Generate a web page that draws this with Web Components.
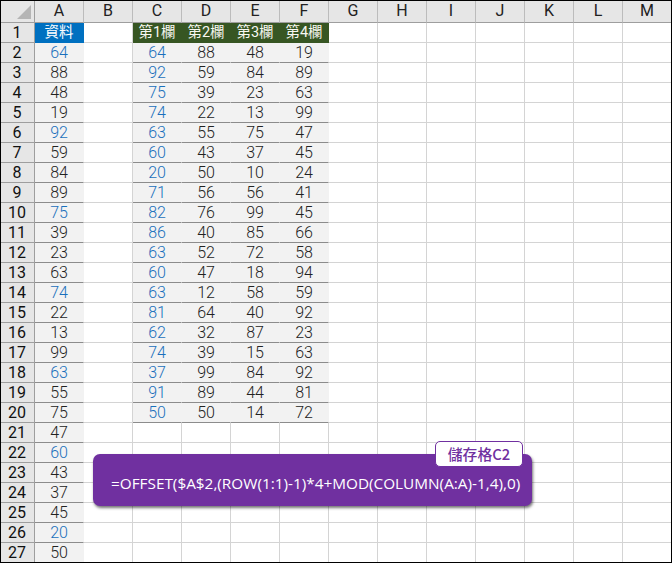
<!DOCTYPE html>
<html><head><meta charset="utf-8"><style>
html,body{margin:0;padding:0;background:#fff}
body{width:672px;height:563px;overflow:hidden;font-family:"Noto Sans CJK TC","Open Sans",sans-serif}
</style></head><body>
<x-sheet></x-sheet>
<script>
const A=[64,88,48,19,92,59,84,89,75,39,23,63,74,22,13,99,63,55,75,47,60,43,37,45,20,50];
const T=[[64,88,48,19],[92,59,84,89],[75,39,23,63],[74,22,13,99],[63,55,75,47],[60,43,37,45],[20,50,10,24],[71,56,56,41],[82,76,99,45],[86,40,85,66],[63,52,72,58],[60,47,18,94],[63,12,58,59],[81,64,40,92],[62,32,87,23],[74,39,15,63],[37,99,84,92],[91,89,44,81],[50,50,14,72]];
class XCell extends HTMLElement{
  constructor(){super();this.attachShadow({mode:'open'}).innerHTML=`<style>
  :host{display:flex;align-items:center;justify-content:center;box-sizing:border-box;min-width:0;height:20px;
   border-right:1px solid #d4d4d4;border-bottom:1px solid #d4d4d4;font:300 16px/1 Roboto,"Noto Sans CJK TC",sans-serif;color:#222;overflow:hidden}
  :host([kind=rowh]){background:#e6e6e6;border-right:1px solid #9e9e9e;border-bottom:1px solid #9e9e9e;color:#111;font-weight:400}
  :host([kind=colh]){background:#e6e6e6;height:23px;border-right:1px solid #bcbcbc;border-bottom:1px solid #9e9e9e;color:#222;font-weight:400}
  :host([kind=data]){background:#f2f2f2;border-right-color:#f2f2f2;border-bottom:1px solid #8c8c8c}
  :host([kind=blue]){background:#f2f2f2;border-right-color:#f2f2f2;border-bottom:1px solid #8c8c8c;color:#1a70bc}
  :host([kind=hA]){background:#0070c0;color:#fff;border-color:#0070c0;font-size:14.5px;font-weight:400;padding-top:2px}
  :host([kind=hG]){background:#375623;color:#f8f8f2;border-color:#375623;font-size:14.5px;font-weight:400;padding-top:2px}
  </style><slot></slot>`;}
}
customElements.define('x-cell',XCell);
class XCorner extends HTMLElement{
  constructor(){super();this.attachShadow({mode:'open'}).innerHTML=`<style>
  :host{display:block;box-sizing:border-box;height:23px;background:#e6e6e6;border-right:1px solid #9e9e9e;border-bottom:1px solid #9e9e9e}
  svg{display:block}</style><svg width="34" height="22"><polygon points="31,5 31,19 17,19" fill="#b5b5b5"/></svg>`;}
}
customElements.define('x-corner',XCorner);
class XCallout extends HTMLElement{
  constructor(){super();this.attachShadow({mode:'open'}).innerHTML=`<style>
  :host{position:absolute;left:93px;top:454px;width:439px;height:52px;box-sizing:border-box;background:#7030a0;border-radius:7px;
   box-shadow:1px 2px 3px rgba(0,0,0,.55);color:#fff;font:15.33px/1 "Open Sans",sans-serif;display:flex;align-items:flex-end;padding:0 0 15px 18px;white-space:nowrap}
  .tag{position:absolute;right:9px;top:-13px;width:88px;height:26px;box-sizing:border-box;background:#fff;border:1px solid #7030a0;border-radius:5px;color:#7030a0;
   font:500 14.8px/23px "Noto Sans CJK TC",sans-serif;text-align:center}
  </style><slot></slot><div class="tag"><slot name="tag"></slot></div>`;}
}
customElements.define('x-callout',XCallout);
class XSheet extends HTMLElement{
  constructor(){super();const r=this.attachShadow({mode:'open'});
   let h='<x-corner></x-corner>';
   'ABCDEFGHIJKLM'.split('').forEach(c=>h+=`<x-cell kind="colh">${c}</x-cell>`);
   const ga=['第1欄','第2欄','第3欄','第4欄'];
   for(let r=1;r<=27;r++){
     h+=`<x-cell kind="rowh">${r}</x-cell>`;
     if(r===1)h+='<x-cell kind="hA">資料</x-cell>';
     else {const v=A[r-2];h+=`<x-cell kind="${(r-2)%4===0?'blue':'data'}">${v}</x-cell>`;}
     h+='<x-cell></x-cell>';
     for(let c=0;c<4;c++){
       if(r===1)h+=`<x-cell kind="hG">${ga[c]}</x-cell>`;
       else if(r<=20)h+=`<x-cell kind="${c===0?'blue':'data'}">${T[r-2][c]}</x-cell>`;
       else h+='<x-cell></x-cell>';
     }
     for(let c=0;c<7;c++)h+='<x-cell></x-cell>';
   }
   r.innerHTML=`<style>
   :host{display:block;position:relative;width:672px;height:563px;overflow:hidden;background:#fff}
   :host::after{content:"";position:absolute;inset:0;border:1px solid #000;pointer-events:none}
   .g{display:grid;grid-template-columns:35px repeat(13,49px);grid-auto-rows:min-content}
   </style><div class="g">${h}</div>
   <x-callout>=OFFSET($A$2,(ROW(1:1)-1)*4+MOD(COLUMN(A:A)-1,4),0)<span slot="tag">儲存格C2</span></x-callout>`;
  }
}
customElements.define('x-sheet',XSheet);
</script></body></html>
